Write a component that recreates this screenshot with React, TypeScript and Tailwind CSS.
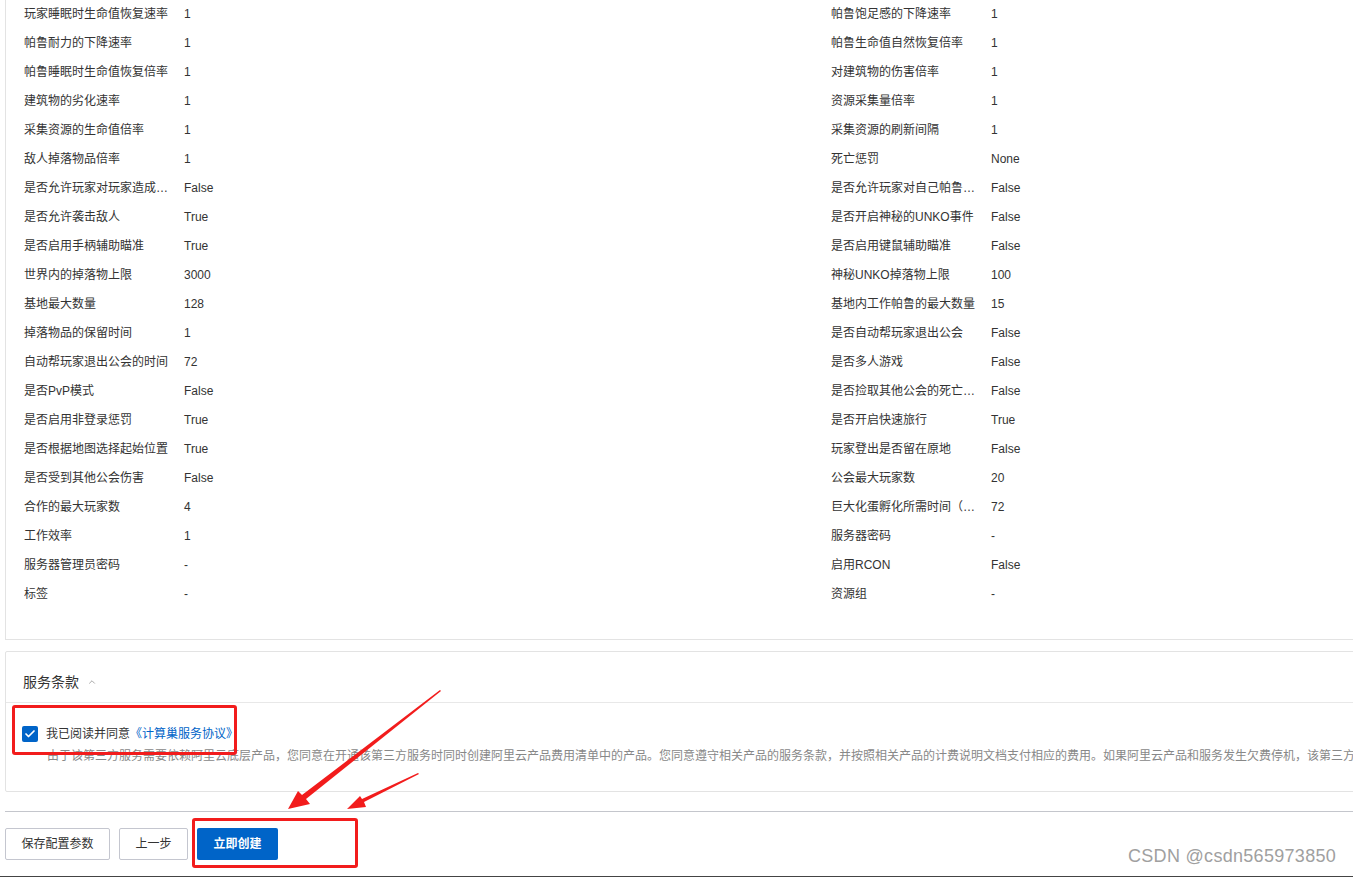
import { ChevronUp, Check } from 'lucide-react';

const rows: [string, string, string, string][] = [
  ['玩家睡眠时生命值恢复速率', '1', '帕鲁饱足感的下降速率', '1'],
  ['帕鲁耐力的下降速率', '1', '帕鲁生命值自然恢复倍率', '1'],
  ['帕鲁睡眠时生命值恢复倍率', '1', '对建筑物的伤害倍率', '1'],
  ['建筑物的劣化速率', '1', '资源采集量倍率', '1'],
  ['采集资源的生命值倍率', '1', '采集资源的刷新间隔', '1'],
  ['敌人掉落物品倍率', '1', '死亡惩罚', 'None'],
  ['是否允许玩家对玩家造成伤害', 'False', '是否允许玩家对自己帕鲁造成伤害', 'False'],
  ['是否允许袭击敌人', 'True', '是否开启神秘的UNKO事件', 'False'],
  ['是否启用手柄辅助瞄准', 'True', '是否启用键鼠辅助瞄准', 'False'],
  ['世界内的掉落物上限', '3000', '神秘UNKO掉落物上限', '100'],
  ['基地最大数量', '128', '基地内工作帕鲁的最大数量', '15'],
  ['掉落物品的保留时间', '1', '是否自动帮玩家退出公会', 'False'],
  ['自动帮玩家退出公会的时间', '72', '是否多人游戏', 'False'],
  ['是否PvP模式', 'False', '是否捡取其他公会的死亡掉落物', 'False'],
  ['是否启用非登录惩罚', 'True', '是否开启快速旅行', 'True'],
  ['是否根据地图选择起始位置', 'True', '玩家登出是否留在原地', 'False'],
  ['是否受到其他公会伤害', 'False', '公会最大玩家数', '20'],
  ['合作的最大玩家数', '4', '巨大化蛋孵化所需时间（小时）', '72'],
  ['工作效率', '1', '服务器密码', '-'],
  ['服务器管理员密码', '-', '启用RCON', 'False'],
  ['标签', '-', '资源组', '-'],
];

const Item = ({ label, value }: { label: string; value: string }) => (
  <div className="flex shrink-0 items-center h-[29px] w-[807px]">
    <div className="w-[160px] shrink-0 pr-[10px]">
      <div className="truncate max-w-[146px] text-[#333]">{label}</div>
    </div>
    <div className="text-[#333]">{value}</div>
  </div>
);

export default function App() {
  return (
    <div
      className="relative w-[1353px] h-[877px] overflow-hidden bg-white text-[12px] leading-[18px]"
      style={{ fontFamily: '"Liberation Sans", "Noto Sans CJK SC", sans-serif' }}
    >
      <div className="ml-[5px] w-[1700px]">
        {/* 参数列表 */}
        <div className="-mt-[1px] border-l border-b border-[#e3e3e3] pl-[18px] pb-[31px]">
          {rows.map(([l1, v1, l2, v2]) => (
            <div key={l1} className="flex">
              <Item label={l1} value={v1} />
              <Item label={l2} value={v2} />
            </div>
          ))}
        </div>

        {/* 服务条款 */}
        <div className="mt-[11px] w-[1400px] border border-[#e3e3e3] rounded-[2px] h-[141px]">
          <div className="flex items-center h-[51px] pl-[17px] pt-[9px] border-b border-[#e8e8e8]">
            <span className="text-[14px] text-[#333]">服务条款</span>
            <ChevronUp className="ml-[8px] w-[10px] h-[10px] text-[#999]" strokeWidth={2} />
          </div>
          <div className="pl-[16px] pt-[22px]">
            <div className="flex items-center gap-[8px]">
              <span className="w-[16px] h-[16px] rounded-[2px] bg-[#0064c8] flex items-center justify-center">
                <Check className="w-[12px] h-[12px] text-white" strokeWidth={3.5} />
              </span>
              <span className="text-[#333]">
                我已阅读并同意<a className="text-[#0064c8]">《计算巢服务协议》</a>
              </span>
            </div>
            <div className="ml-[25px] mt-[4px] whitespace-nowrap text-[#888]">
              由于该第三方服务需要依赖阿里云底层产品，您同意在开通该第三方服务时同时创建阿里云产品费用清单中的产品。您同意遵守相关产品的服务条款，并按照相关产品的计费说明文档支付相应的费用。如果阿里云产品和服务发生欠费停机，该第三方服务也将停止服务。
            </div>
          </div>
        </div>

        {/* 底部操作 */}
        <div className="mt-[19px] w-[1400px] border-t border-[#c4c6cc] pt-[16px] flex gap-[9px]">
          <button className="h-[32px] w-[105px] border border-[#c4c6cf] rounded-[2px] text-[#333] bg-white">保存配置参数</button>
          <button className="h-[32px] w-[69px] border border-[#c4c6cf] rounded-[2px] text-[#333] bg-white">上一步</button>
          <button className="h-[32px] w-[81px] rounded-[2px] bg-[#0064c8] text-white font-bold">立即创建</button>
        </div>
      </div>

      <div className="absolute left-0 right-0 bottom-0 h-[1px] bg-[#444]" />

      {/* 标注 */}
      <div className="absolute left-[12px] top-[705px] w-[225px] h-[50px] border-[3px] border-[#f21c1c] rounded-[3px]" />
      <div className="absolute left-[192px] top-[818px] w-[166px] h-[50px] border-[3px] border-[#f21c1c] rounded-[3px]" />
      <svg className="absolute left-0 top-0" width="1353" height="877">
        <polygon points="440,690 441,691 306,799 310,804 288,809 298,791 302,795" fill="#f21c1c" />
        <polygon points="418,773 419,774 364,802 366,807 347,809 360,796 362,799" fill="#f21c1c" />
      </svg>

      <div
        className="absolute left-[1128px] top-[847px] text-[18px] text-[#a0a0a0] tracking-[0.3px]"
        style={{ fontFamily: '"Liberation Sans", sans-serif' }}
      >
        CSDN @csdn565973850
      </div>
    </div>
  );
}
